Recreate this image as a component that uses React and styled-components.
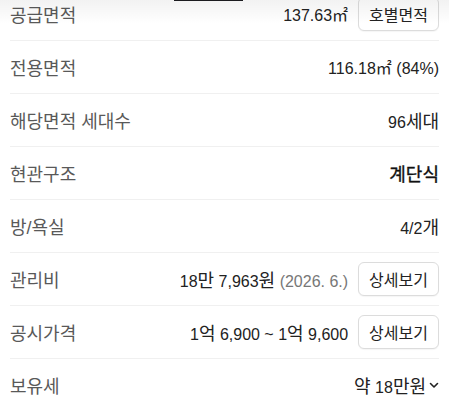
import React from 'react';
import styled, { createGlobalStyle } from 'styled-components';

const GlobalStyle = createGlobalStyle`
    html, body {
        margin: 0;
        padding: 0;
        background: #fff;
        overflow: hidden;
    }
    body {
        font-family: "Liberation Sans", "Noto Sans CJK KR", sans-serif;
        -webkit-font-smoothing: antialiased;
    }
`;

const Page = styled.div`
    position: relative;
    width: 449px;
    height: 410px;
    overflow: hidden;
`;

// sticky tab bar shadow peeking over the scrolled list
const TopShade = styled.div`
    position: absolute;
    top: 0;
    left: 0;
    right: 0;
    height: 24px;
    background: linear-gradient(to bottom, rgba(0, 0, 0, 0.05), rgba(0, 0, 0, 0));
    pointer-events: none;
    z-index: 2;
`;

const ActiveTabLine = styled.div`
    position: absolute;
    top: 0;
    left: 174px;
    width: 69px;
    height: 1px;
    background: #1b1b1f;
    z-index: 3;
`;

const List = styled.dl`
    margin: -12px 0 0;
    padding: 0 10px;
`;

const Row = styled.div`
    display: flex;
    align-items: center;
    justify-content: space-between;
    height: 52px;
    border-bottom: 1px solid ${(p) => (p.last ? 'transparent' : '#f0f0f0')};
`;

const Label = styled.dt`
    margin: 0;
    font-size: 18px;
    color: #595959;
`;

const Value = styled.dd`
    margin: 0;
    display: flex;
    align-items: center;
    gap: 10px;
    font-size: 16px;
    color: ${(p) => (p.strong ? '#111' : '#222')};
    -webkit-text-stroke: ${(p) => (p.strong ? '0.35px #111' : '0')};
`;

// hangul runs are set a bit larger than the latin digits around them
const Ko = styled.span`
    font-size: ${(p) => (p.unit ? '16px' : '18px')};
`;

const Sub = styled.span`
    color: #777;
`;

const SmallButton = styled.button`
    height: 34px;
    padding: 0 10px;
    border: 1px solid #dcdcdc;
    border-radius: 6px;
    background: #fff;
    box-shadow: 0 1px 1px rgba(0, 0, 0, 0.04);
    font-family: inherit;
    font-size: 16px;
    color: #222;
    cursor: pointer;
`;

const Toggle = styled.span`
    display: flex;
    align-items: center;
    gap: 3px;
`;

const Chevron = () => (
    <svg width="10" height="7" viewBox="0 0 10 7" fill="none">
        <path d="M1.5 1.5 L5 5 L8.5 1.5" stroke="#222" strokeWidth="1.6" strokeLinecap="round" strokeLinejoin="round" />
    </svg>
);

const KO_RUN = /([\u3131-\uD79D\u33A1]+)/;

const ko = (text) =>
    text.split(KO_RUN).map((part, i) =>
        KO_RUN.test(part) ? (
            <Ko key={i} unit={part === '㎡'}>
                {part}
            </Ko>
        ) : (
            part
        )
    );

const App = () => {
    return (
        <Page>
            <GlobalStyle />
            <TopShade />
            <ActiveTabLine />
            <List>
                <Row>
                    <Label>공급면적</Label>
                    <Value>
                        <span>{ko('137.63㎡')}</span>
                        <SmallButton>호별면적</SmallButton>
                    </Value>
                </Row>
                <Row>
                    <Label>전용면적</Label>
                    <Value>
                        <span>{ko('116.18㎡ (84%)')}</span>
                    </Value>
                </Row>
                <Row>
                    <Label>해당면적 세대수</Label>
                    <Value>
                        <span>{ko('96세대')}</span>
                    </Value>
                </Row>
                <Row>
                    <Label>현관구조</Label>
                    <Value strong>
                        <span>{ko('계단식')}</span>
                    </Value>
                </Row>
                <Row>
                    <Label>방/욕실</Label>
                    <Value>
                        <span>{ko('4/2개')}</span>
                    </Value>
                </Row>
                <Row>
                    <Label>관리비</Label>
                    <Value>
                        <span>
                            {ko('18만 7,963원')} <Sub>(2026. 6.)</Sub>
                        </span>
                        <SmallButton>상세보기</SmallButton>
                    </Value>
                </Row>
                <Row>
                    <Label>공시가격</Label>
                    <Value>
                        <span>{ko('1억 6,900 ~ 1억 9,600')}</span>
                        <SmallButton>상세보기</SmallButton>
                    </Value>
                </Row>
                <Row last>
                    <Label>보유세</Label>
                    <Value>
                        <Toggle>
                            <span>{ko('약 18만원')}</span>
                            <Chevron />
                        </Toggle>
                    </Value>
                </Row>
            </List>
        </Page>
    );
};

export default App;
